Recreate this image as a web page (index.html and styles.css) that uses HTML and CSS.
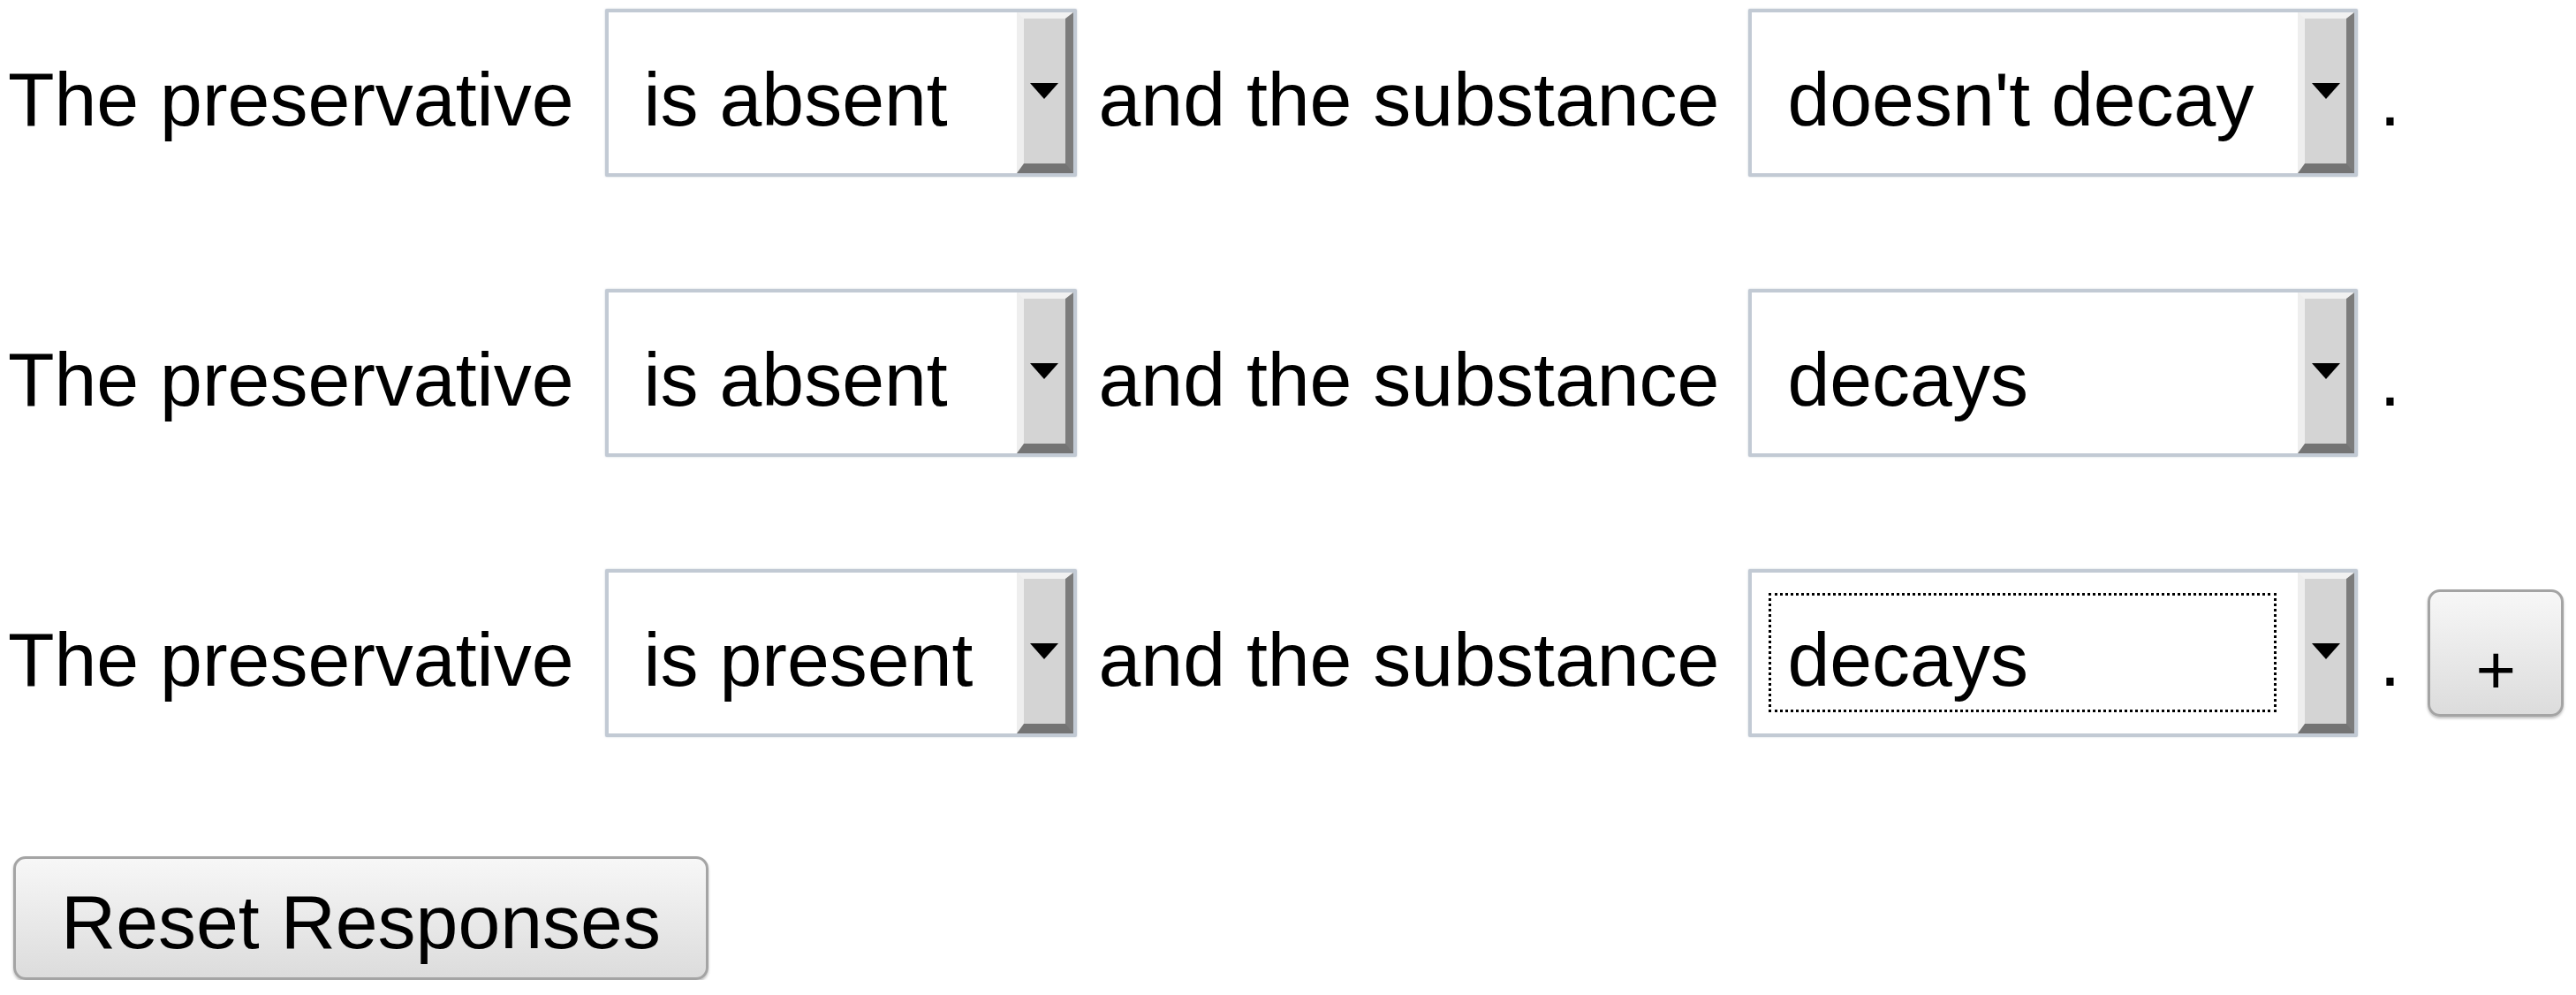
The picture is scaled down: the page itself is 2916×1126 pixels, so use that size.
FILE: index.html
```html
<!DOCTYPE html>
<html lang="en">
<head>
<meta charset="utf-8">
<title>Preservative responses</title>
<link rel="stylesheet" href="styles.css">
</head>
<body>
<div class="page">
  <div class="row">
    <span class="txt lead">The preservative</span>
    <span class="sel sel-a"><span class="val">is absent</span><span class="drop"><span class="arrow"></span></span></span>
    <span class="txt mid">and the substance</span>
    <span class="sel sel-b"><span class="val">doesn't decay</span><span class="drop"><span class="arrow"></span></span></span>
    <span class="txt dot">.</span>
  </div>
  <div class="row">
    <span class="txt lead">The preservative</span>
    <span class="sel sel-a"><span class="val">is absent</span><span class="drop"><span class="arrow"></span></span></span>
    <span class="txt mid">and the substance</span>
    <span class="sel sel-b"><span class="val">decays</span><span class="drop"><span class="arrow"></span></span></span>
    <span class="txt dot">.</span>
  </div>
  <div class="row">
    <span class="txt lead">The preservative</span>
    <span class="sel sel-a"><span class="val">is present</span><span class="drop"><span class="arrow"></span></span></span>
    <span class="txt mid">and the substance</span>
    <span class="sel sel-b"><span class="val focus">decays</span><span class="drop"><span class="arrow"></span></span></span>
    <span class="txt dot">.</span>
    <button class="btn plus" type="button">+</button>
  </div>
  <div class="actions">
    <button class="btn reset" type="button">Reset Responses</button>
  </div>
</div>
</body>
</html>
```

FILE: styles.css
```css
html, body {
  margin: 0;
  padding: 0;
  background: #ffffff;
}

.page {
  padding: 10px 8px 0 8px;
  font-family: "Liberation Sans", Arial, sans-serif;
  font-size: 86px;
  color: #000000;
}

.row {
  display: flex;
  align-items: baseline;
  height: 190px;
  margin-bottom: 127px;
}

.row:nth-child(3) {
  margin-bottom: 135px;
}

.txt {
  white-space: pre;
  line-height: normal;
}

.lead {
  margin-left: 1px;
}

.mid {
  margin-left: 25px;
}

.dot {
  margin-left: 24px;
}

.sel {
  display: flex;
  align-items: stretch;
  box-sizing: border-box;
  height: 190px;
  border: 4px solid #c2cad4;
  border-radius: 2px;
  background: #ffffff;
  box-shadow: 0 0 2px rgba(150, 165, 180, 0.6);
}

.sel-a {
  width: 534px;
  margin-left: 35px;
}

.sel-b {
  width: 690px;
  margin-left: 33px;
}

.val {
  flex: 1;
  display: flex;
  align-items: center;
  margin: 26px 27px 27px 22px;
  padding: 16px 0 0 18px;
  white-space: pre;
  line-height: normal;
}

.val.focus {
  outline: 3px dotted #000000;
  outline-offset: 0;
}

.drop {
  width: 64px;
  box-sizing: border-box;
  display: flex;
  align-items: center;
  justify-content: center;
  background: #d4d4d4;
  border-style: solid;
  border-width: 7px 9px 11px 8px;
  border-color: #f1f1f1 #7c7c7c #747474 #eeeeee;
}

.arrow {
  width: 0;
  height: 0;
  border-left: 16px solid transparent;
  border-right: 16px solid transparent;
  border-top: 18px solid #000000;
}

.btn {
  font-family: "Liberation Sans", Arial, sans-serif;
  font-size: 86px;
  color: #000000;
  line-height: normal;
  box-sizing: border-box;
  border: 3px solid #a4a4a4;
  border-radius: 14px;
  background: linear-gradient(#f7f7f7, #dcdcdc);
  box-shadow: 0 2px 3px rgba(0, 0, 0, 0.25);
  padding: 0;
  margin: 0;
}

.plus {
  align-self: center;
  width: 154px;
  height: 144px;
  margin-left: 31px;
  padding-top: 38px;
  font-size: 78px;
}

.actions {
  display: flex;
}

.reset {
  width: 787px;
  height: 140px;
  margin-left: 7px;
  padding-top: 8px;
}
```
